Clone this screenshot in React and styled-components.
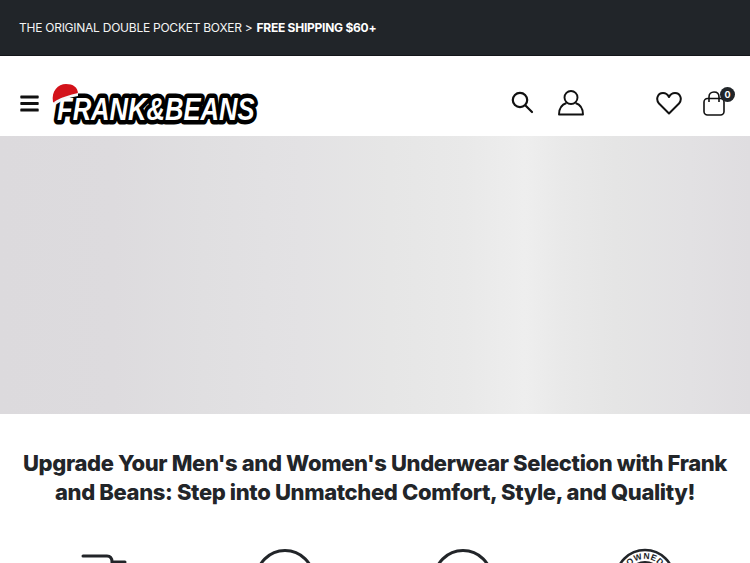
import styled, { createGlobalStyle } from 'styled-components';
import { FaBars } from 'react-icons/fa';

const GlobalStyle = createGlobalStyle`
  html, body {
    margin: 0;
    padding: 0;
    height: 563px;
    overflow: hidden;
    background: #fff;
  }
  * { box-sizing: border-box; }
`

const TopBar = styled.div`
  height: 56px;
  background: #212529;
  border-bottom: 1px solid #14161a;
  color: #f4f4f4;
  display: flex;
  align-items: center;
  gap: 3px;
  padding: 0 19px;
  font-family: Inter, "Liberation Sans", sans-serif;
  font-size: 12px;
  letter-spacing: -0.25px;
  white-space: pre;

  strong {
    font-weight: 700;
    color: #fff;
    margin-left: 1px;
  }
`

const Header = styled.header`
  height: 80px;
  display: flex;
  align-items: center;
  padding: 14px 25px 0 19px;
`

const MenuButton = styled.div`
  display: flex;
  color: #111;
  margin-right: 11px;
`

const Actions = styled.div`
  margin-left: auto;
  display: flex;
  align-items: center;
`

const IconButton = styled.div`
  display: flex;
  position: relative;
  margin-left: ${(p) => p.$gap}px;
  top: ${(p) => p.$lift || 0}px;
  color: #111;
`

const CartCount = styled.span`
  position: absolute;
  top: -4px;
  right: -10px;
  width: 15px;
  height: 15px;
  border-radius: 50%;
  background: #212529;
  color: #fff;
  font-family: Inter, "Liberation Sans", sans-serif;
  font-size: 9px;
  font-weight: 700;
  display: flex;
  align-items: center;
  justify-content: center;
`

const Hero = styled.div`
  height: 278px;
  background: linear-gradient(90deg, #dcdadd 0%, #dddbde 15%, #e0dfe1 27%, #e3e2e4 40%, #e6e6e6 52%, #e9e9e9 62%, #eeeeee 70%, #e9e9e9 75%, #e5e5e5 82%, #e2e1e3 92%, #dfdde0 100%);
`

const Heading = styled.h1`
  margin: 0;
  padding: 35px 15px 0;
  text-align: center;
  font-family: Inter, "Liberation Sans", sans-serif;
  font-size: 22px;
  line-height: 29px;
  font-weight: 800;
  letter-spacing: -0.36px;
  color: #222529;
`

const Features = styled.div`
  display: grid;
  grid-template-columns: repeat(4, 1fr);
  padding: 42px 15px 0;
  justify-items: center;
`

const FeatureIcon = styled.svg`
  width: 60px;
  height: 60px;
  display: block;
  margin-right: ${(p) => p.$nudge || 0}px;
  fill: none;
  stroke: #222529;
  stroke-width: 3;
  stroke-linecap: round;
  overflow: visible;
`

const BadgeText = styled.text`
  font-family: "Liberation Sans", Arial, sans-serif;
  font-size: 8.5px;
  font-weight: 700;
  letter-spacing: 0.5px;
  fill: #222529;
  stroke: none;
`

const LogoSvg = styled.svg`
  display: block;
  width: 208px;
  height: 42px;
  overflow: visible;

  text {
    font-family: "Liberation Sans", Arial, sans-serif;
    font-weight: 700;
    font-style: italic;
    font-size: 32px;
    paint-order: stroke;
    fill: #fff;
    stroke: #000;
    stroke-width: 9px;
    stroke-linejoin: round;
  }
`

const Logo = () => (
  <LogoSvg viewBox="0 0 208 42">
    <text transform="translate(6 38) scale(0.8 1)">FRANK&amp;BEANS</text>
    <path d="M2 20 C0 9 7 2 15 2 C22 2 27 5 27 12 L8 17 L4 21 Z" fill="#d3121a" />
    <path d="M3 20 C10 15 19 13 27 11 L27 14 C19 15 11 18 4 23 Z" fill="#f6f6f6" />
  </LogoSvg>
)

const App = () => {
  return (
    <>
      <GlobalStyle />
      <TopBar>
        <span>THE ORIGINAL DOUBLE POCKET BOXER</span>
        <span>&gt;</span>
        <strong>FREE SHIPPING $60+</strong>
      </TopBar>
      <Header>
        <MenuButton><FaBars size={21} /></MenuButton>
        <Logo />
        <Actions>
          <IconButton $gap={0} $lift={-1}>
            <svg width="24" height="24" viewBox="0 0 24 24" fill="none" stroke="currentColor" strokeWidth="2.2">
              <circle cx="10" cy="10" r="7.2" />
              <path d="M15.5 15.5 L22 22" strokeLinecap="round" />
            </svg>
          </IconButton>
          <IconButton $gap={24}>
            <svg width="26" height="26" viewBox="0 0 26 26" fill="none" stroke="currentColor" strokeWidth="1.9">
              <circle cx="13" cy="7.5" r="6.5" />
              <path d="M8.5 13 C4 14.5 1 18 1 24.5 H25 C25 18 22 14.5 17.5 13" strokeLinejoin="round" />
            </svg>
          </IconButton>
          <IconButton $gap={72}>
            <svg width="26" height="24" viewBox="0 0 26 24" fill="none" stroke="currentColor" strokeWidth="2">
              <path d="M13 22.5 L3 12.5 C-0.5 8.5 1.5 2 7 2 C10 2 12 4 13 6 C14 4 16 2 19 2 C24.5 2 26.5 8.5 23 12.5 Z" strokeLinejoin="round" />
            </svg>
          </IconButton>
          <IconButton $gap={21}>
            <svg width="22" height="25" viewBox="0 0 22 25" fill="none" stroke="currentColor" strokeWidth="1.6">
              <rect x="1" y="7.5" width="20" height="16.5" rx="3.5" />
              <path d="M6 11 V6 C6 3 8 1 11 1 C14 1 16 3 16 6 V11" />
            </svg>
            <CartCount>0</CartCount>
          </IconButton>
        </Actions>
      </Header>
      <Hero />
      <Heading>Upgrade Your Men's and Women's Underwear Selection with Frank and Beans: Step into Unmatched Comfort, Style, and Quality!</Heading>
      <Features>
        <FeatureIcon viewBox="0 0 60 60">
          <path d="M8 7 H32 Q37 7 37 13 H50" />
        </FeatureIcon>
        <FeatureIcon viewBox="0 0 60 60">
          <circle cx="30" cy="30" r="28.5" />
        </FeatureIcon>
        <FeatureIcon viewBox="0 0 60 60" $nudge={4}>
          <circle cx="30" cy="30" r="28.5" />
        </FeatureIcon>
        <FeatureIcon viewBox="0 0 60 60">
          <defs>
            <path id="badge-arc" d="M30 50 A20 20 0 1 1 30.01 50" />
          </defs>
          <circle cx="30" cy="30" r="29" strokeWidth="2.5" />
          <circle cx="30" cy="30" r="15.5" strokeWidth="5" />
          <BadgeText>
            <textPath href="#badge-arc" startOffset="50%" textAnchor="middle">FAMILY OWNED BRAND</textPath>
          </BadgeText>
        </FeatureIcon>
      </Features>
    </>
  )
}

export default App
